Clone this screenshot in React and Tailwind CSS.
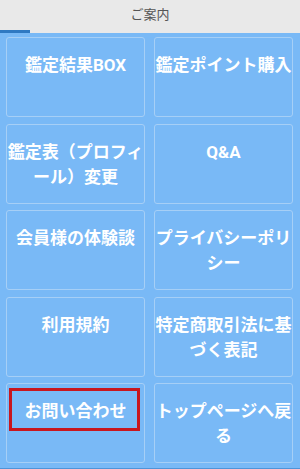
import React from 'react'

const items = [
  { label: '鑑定結果BOX' },
  { label: '鑑定ポイント購入' },
  { label: '鑑定表（プロフィール）変更' },
  { label: 'Q&A' },
  { label: '会員様の体験談' },
  { label: 'プライバシーポリシー' },
  { label: '利用規約' },
  { label: '特定商取引法に基づく表記' },
  { label: 'お問い合わせ', marked: true },
  { label: 'トップページへ戻る' },
]

const App = () => {
  return (
    <div
      className="w-[300px] h-[469px] overflow-hidden bg-[#79b9f6] border-b border-[#4f94d8]"
      style={{ fontFamily: 'Roboto, "Noto Sans CJK JP", sans-serif' }}
    >
      {/* Tab header */}
      <div className="relative h-[33px] bg-[#e9e9e9] flex items-center justify-center pb-[3px]">
        <span className="text-[13px] text-[#555555]">ご案内</span>
        <span className="absolute left-0 bottom-0 w-[30px] h-[3px] bg-[#2f79c2]" />
      </div>

      {/* Menu grid */}
      <div className="grid grid-cols-[139px_139px] gap-x-[9px] gap-y-[6.5px] pt-[4px] pl-[6px]">
        {items.map((item) => (
          <div
            key={item.label}
            className="relative h-[80px] rounded-[3px] border border-[#a6cff6] pt-[15px] text-center"
          >
            <a className="block text-[17px] leading-[25px] font-bold text-white tracking-[0px]">
              {item.label}
            </a>
            {item.marked && (
              <span className="absolute left-[2px] top-[4px] w-[131px] h-[43px] border-[3px] border-[#c8161e]" />
            )}
          </div>
        ))}
      </div>
    </div>
  )
}

export default App
